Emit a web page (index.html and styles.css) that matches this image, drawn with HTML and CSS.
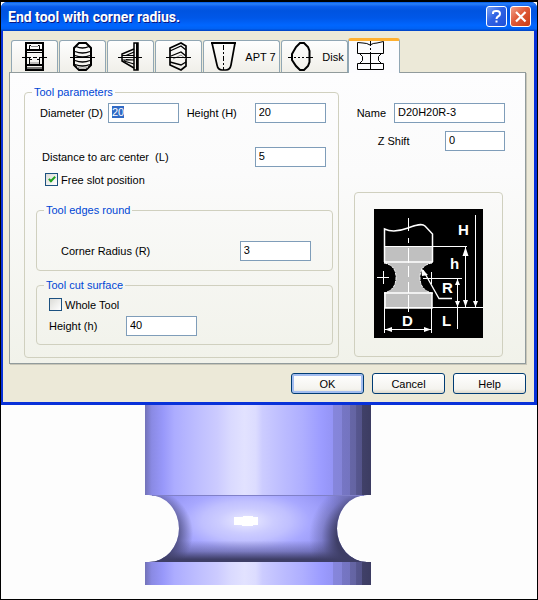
FILE: index.html
```html
<!DOCTYPE html>
<html lang="en">
<head>
<meta charset="utf-8">
<title>End tool with corner radius.</title>
<link rel="stylesheet" href="styles.css">
</head>
<body>
<main class="viewport">
  <section class="dialog" role="dialog" aria-labelledby="dialog-title">
    <header class="titlebar">
      <h1 class="title" id="dialog-title">End tool with corner radius.</h1>
      <button class="caption caption-help" type="button" aria-label="Context help">
        <svg width="19" height="19" viewBox="0 0 19 19" fill="none" stroke="#fff" stroke-width="2"><path d="M6 7V6Q6 4 9 4H10Q13 4 13 7Q13 8.500 11 9.500Q9.500 10.300 9.500 12"/><path d="M9.500 13.500V15.500"/></svg>
      </button>
      <button class="caption caption-close" type="button" aria-label="Close">
        <svg width="19" height="19" viewBox="0 0 19 19" fill="none" stroke="#fff" stroke-width="2.200"><path d="M5 5L14.500 14.500M14.500 5L5 14.500"/></svg>
      </button>
    </header>
    <form class="content">
      <div class="tabs" role="tablist">
        <button class="tab" type="button" role="tab" aria-label="Cylindrical">
          <svg width="26" height="29" viewBox="0 0 26 29" fill="none" stroke="#000" stroke-width="2"><rect x="4" y="1" width="17" height="27"/><path d="M4 8H21M4 23H21" /><path d="M4 10.500H21M4 26H21" stroke-width="1"/><path d="M7.500 7V3.500H9M17.500 7V3.500H16M7.500 16V22M17.500 16V22" stroke-width="1"/><path d="M7 17.500H10M15 17.500H18" stroke-width="1"/><path d="M8 21H17M9 4.500H16" stroke="#888" stroke-width="1"/><path d="M0 15.500H9M11 15.500H15M17 15.500H25" stroke-width="1"/></svg>
        </button>
        <button class="tab" type="button" role="tab" aria-label="Rounded">
          <svg width="26" height="29" viewBox="0 0 26 29" fill="none" stroke="#000" stroke-width="2"><path d="M9 1H16L21 6V23L16 28H9L4 23V6Z"/><path d="M6 4.500Q12.500 7.500 19 4.500M5 9.500Q12.500 12.500 20 9.500M5 13.500Q12.500 16.500 20 13.500M5 18.500Q12.500 21.500 20 18.500M5 22.500Q12.500 25.500 20 22.500" stroke-width="1.300"/><path d="M7 25.500Q12.500 27 18 25.500" stroke="#999" stroke-width="1"/><path d="M0 15.500H25" stroke-width="1"/></svg>
        </button>
        <button class="tab" type="button" role="tab" aria-label="Conical">
          <svg width="26" height="29" viewBox="0 0 26 29" fill="none" stroke="#000" stroke-width="2"><path d="M16 1H20V28H16Z" stroke-width="1.500"/><path d="M19 1V28"/><path d="M16 7L4 12V19L16 26" stroke-width="1.500"/><path d="M16 10L8 13.500M16 18L8 17.500M16 22L6 19M4 13.500H16M4 18H16" stroke-width="1.200"/><path d="M0 15.500H24" stroke-width="1"/></svg>
        </button>
        <button class="tab" type="button" role="tab" aria-label="Angular">
          <svg width="26" height="29" viewBox="0 0 26 29" fill="none" stroke="#000" stroke-width="1.700"><path d="M4 6L15 1L20 4V24L15 28L4 23Z"/><path d="M4 9L15 4L20 8M5 14L15 10L20 14M4 20L15 23L20 20" stroke-width="1.300"/><path d="M7 17L15 13L20 17" stroke="#888" stroke-width="1"/><path d="M0 15.500H25" stroke-width="1"/></svg>
        </button>
        <button class="tab tab-wide" type="button" role="tab">
          <svg width="26" height="29" viewBox="0 0 26 29" fill="none" stroke="#000" stroke-width="2"><path d="M0 1H25" /><path d="M1 1L6 23Q7 28 11 28H15Q19 28 20 23L24 1" stroke-width="1.700"/><path d="M12.500 3V28" stroke-width="1" stroke-dasharray="5 2 2 2"/></svg>
          <span>APT 7</span>
        </button>
        <button class="tab tab-disk" type="button" role="tab">
          <svg width="26" height="29" viewBox="0 0 26 29" fill="none" stroke="#000" stroke-width="2"><path d="M12 1H16L20 5L21.500 9V20L20 24L16 28H12L8 24L4 18V12L8 5Z"/><path d="M0 15.500H4M6 15.500H8M10 15.500H12M14 15.500H16M18 15.500H25" stroke-width="1"/></svg>
          <span>Disk</span>
        </button>
        <button class="tab tab-active" type="button" role="tab" aria-selected="true" aria-label="Corner radius">
          <svg width="27" height="30" viewBox="0 0 27 30" fill="none" stroke="#000"><path d="M.5 12.500V1.500L6 2Q10 2 13 4Q16 2 20 2L26.500 .5V12.500ZM.5 22.500H26.500V28.500H.5ZM2.500 12.500L5.500 15.500V19.500L2.500 22.500M24.500 12.500L21.500 15.500V19.500L24.500 22.500M13.500 0V5M13.500 7V9M13.500 11V29"/></svg>
        </button>
      </div>

      <div class="panel">
        <fieldset class="group group-main">
          <legend>Tool parameters</legend>
          <div class="group-body">
            <div class="row row-size">
              <label class="short" for="diameter">Diameter (D)</label>
              <input class="num" id="diameter" type="text" value="20">
              <label class="short second" for="height">Height (H)</label>
              <input class="num" id="height" type="text" value="20">
            </div>
            <div class="row row-arc">
              <label for="arc">Distance to arc center &nbsp;(L)</label>
              <input class="num" id="arc" type="text" value="5">
            </div>
            <label class="check check-slot"><input type="checkbox" checked>Free slot position</label>

            <fieldset class="group group-edges">
              <legend>Tool edges round</legend>
              <div class="group-body row">
                <label for="radius">Corner Radius (R)</label>
                <input class="num" id="radius" type="text" value="3">
              </div>
            </fieldset>

            <fieldset class="group group-cut">
              <legend>Tool cut surface</legend>
              <div class="group-body">
                <label class="check"><input type="checkbox">Whole Tool</label>
                <div class="row row-cut">
                  <label for="cut">Height (h)</label>
                  <input class="num" id="cut" type="text" value="40">
                </div>
              </div>
            </fieldset>
          </div>
        </fieldset>

        <div class="side">
          <div class="row row-name">
            <label for="name">Name</label>
            <input class="name" id="name" type="text" value="D20H20R-3">
          </div>
          <div class="row row-shift">
            <label for="shift">Z Shift</label>
            <input class="shift" id="shift" type="text" value="0">
          </div>
          <figure class="preview">
            <svg class="diagram" width="109" height="129" viewBox="0 0 109 129" role="img" aria-label="Tool dimensions">
              <rect width="109" height="129" fill="#000"/>
              <path d="M10 38H58V54Q46 56 46 68.500Q46 81 58 84V99H10V84Q22 81 22 68.500Q22 56 10 54Z" fill="#c0c0c0"/>
              <g fill="none" stroke="#fff">
                <path d="M10.500 53V20C17 23 26 22 34 19S48 14 51 17L58.500 25V53" stroke-width="1.500"/>
                <path d="M10 53H59M10 84H59M11 84V99H58V84" stroke-width="1.500"/>
                <path d="M10 54Q22 56 22 68.500Q22 81 10 84M58 54Q46 56 46 68.500Q46 81 58 84" stroke-dasharray="3 1"/>
                <path d="M10 37.500H93M10 98.500H109M49 69.500H88M3 68.500H15M9.500 62V75M57.500 63V75"/>
                <path d="M34.500 9V22M34.500 29V34M34.500 39V54M34.500 57V68M34.500 73V84M34.500 86V103"/>
                <path d="M101.500 6V98M91.500 38V98M83.500 70V120M10.500 98V124M57.500 98V124M11 120.500H57"/>
                <path d="M49 61L65 89.500H78" stroke-width="1.300"/>
              </g>
              <path d="M91.500 38L88.500 47H94.500ZM91.500 98L89 91H94ZM83.500 70L81 76H86ZM83.500 98L81 92H86ZM101.500 98L99 92H104ZM11 120.500L18 118V123ZM57 120.500L50 118V123ZM47 59L48 67L54 66Z" fill="#fff"/>
              <g class="marks">
                <text x="84" y="26">H</text><text x="76" y="60">h</text><text x="68" y="84">R</text><text x="28" y="117">D</text><text x="68" y="117">L</text>
              </g>
            </svg>
          </figure>
        </div>
      </div>

      <div class="actions">
        <button class="action action-default" type="submit">OK</button>
        <button class="action" type="button">Cancel</button>
        <button class="action" type="button">Help</button>
      </div>
    </form>
  </section>

  <svg class="model" width="226" height="180" viewBox="0 0 226 180" role="img" aria-label="Tool model">
    <defs>
      <linearGradient id="side">
        <stop offset="0" stop-color="#7272b8"/><stop offset=".03" stop-color="#8a8ae4"/><stop offset=".08" stop-color="#9898fa"/><stop offset=".13" stop-color="#acacff"/><stop offset=".22" stop-color="#bcbcff"/><stop offset=".32" stop-color="#cccbff"/><stop offset=".38" stop-color="#dadaff"/><stop offset=".44" stop-color="#e2e2ff"/><stop offset=".49" stop-color="#dcdcff"/><stop offset=".52" stop-color="#ccccff"/><stop offset=".6" stop-color="#bebeff"/><stop offset=".7" stop-color="#aeaeff"/><stop offset=".78" stop-color="#9c9cff"/><stop offset=".83" stop-color="#9494f6"/>
        <stop offset=".832" stop-color="#8686dc"/><stop offset=".87" stop-color="#8484d8"/><stop offset=".872" stop-color="#7676c4"/><stop offset=".906" stop-color="#7474c0"/><stop offset=".908" stop-color="#6666a6"/><stop offset=".934" stop-color="#6464a2"/><stop offset=".936" stop-color="#56568e"/><stop offset=".96" stop-color="#54548a"/><stop offset=".962" stop-color="#404068"/><stop offset="1" stop-color="#3c3c62"/>
      </linearGradient>
      <radialGradient id="shine" gradientUnits="userSpaceOnUse" cx="0" cy="0" r="1" gradientTransform="translate(101 116) scale(110 50)">
        <stop offset="0" stop-color="#f4f4ff"/><stop offset=".12" stop-color="#dcdcff"/><stop offset=".25" stop-color="#ccccff"/><stop offset=".4" stop-color="#c0c0ff"/><stop offset=".58" stop-color="#a8a8ff"/><stop offset=".85" stop-color="#9494f4"/><stop offset="1" stop-color="#8686dc"/>
      </radialGradient>
      <linearGradient id="under" x2="0" y2="1">
        <stop offset=".68" stop-color="#3e3e66" stop-opacity="0"/><stop offset=".84" stop-color="#3e3e66" stop-opacity=".4"/><stop offset=".96" stop-color="#3e3e66"/>
      </linearGradient>
      <radialGradient id="edge" gradientUnits="userSpaceOnUse" cx="222" cy="123.500" r="58" gradientTransform="translate(0 9)">
        <stop offset=".52" stop-color="#3e3e66"/><stop offset=".62" stop-color="#3e3e66" stop-opacity=".75"/><stop offset=".78" stop-color="#3e3e66" stop-opacity=".3"/><stop offset="1" stop-color="#3e3e66" stop-opacity="0"/>
      </radialGradient>
      <radialGradient id="edge-left" gradientUnits="userSpaceOnUse" cx="4" cy="128" r="44">
        <stop offset=".62" stop-color="#3e3e66" stop-opacity=".8"/><stop offset="1" stop-color="#3e3e66" stop-opacity="0"/>
      </radialGradient>
    </defs>
    <rect width="226" height="90" fill="url(#side)"/>
    <path d="M4 90A30 33.500 0 0 1 4 157H222A30 33.500 0 0 1 222 90Z" fill="url(#shine)"/>
    <path d="M4 90A30 33.500 0 0 1 4 157H222A30 33.500 0 0 1 222 90Z" fill="url(#under)"/>
    <path d="M4 90A30 33.500 0 0 1 4 157H222A30 33.500 0 0 1 222 90Z" fill="url(#edge)"/>
    <path d="M4 90A30 33.500 0 0 1 4 157H222A30 33.500 0 0 1 222 90Z" fill="url(#edge-left)"/>
    <path d="M89 112H98V111H108V112H113V120H108V121H97V120H89Z" fill="#fff"/>
    <path d="M7 90.500H219" stroke="#8080c8"/>
    <rect y="157" width="226" height="23" fill="url(#side)"/>
  </svg>
</main>
<script src="script.js"></script>
</body>
</html>
```
FILE: styles.css
```css
* {
  box-sizing: border-box;
}

body {
  margin: 0;
  background: #fdfdfd;
  color: #000;
  font: 11px/14px "Liberation Sans", Arial, sans-serif;
}

button,
input {
  font: inherit;
  color: inherit;
}

.viewport {
  min-height: 100vh;
  border: 1px solid #000;
  border-top-width: 2px;
}

.dialog {
  background: #0a3fdc;
  border-radius: 6px 6px 0 0;
}

.titlebar {
  display: flex;
  align-items: center;
  gap: 3px;
  height: 29px;
  padding: 0 6px 0 7px;
  border-radius: 6px 6px 0 0;
  background: linear-gradient(#0058e6 0, #2a80f8 6%, #0a5cec 16%, #0054e0 30%, #0057e8 55%, #0066ff 80%, #0062f4 92%, #0040c0 100%);
}

.title {
  flex: 1;
  margin: 0;
  color: #fff;
  font: bold 14px/16px Roboto, sans-serif;
  text-shadow: 1px 1px 0 #0a1883;
}

.caption {
  display: grid;
  place-items: center;
  width: 21px;
  height: 21px;
  padding: 0;
  border: 1px solid #fff;
  border-radius: 3px;
}

.caption-help {
  background: linear-gradient(135deg, #7ba2f4, #2f62e4 45%, #1f50d8);
}

.caption-close {
  background: linear-gradient(135deg, #f0a08a, #e05a38 45%, #c83c14);
}

.content {
  padding: 7px 8px 8px 6px;
  border: solid #0831d9;
  border-width: 0 3px 3px 2px;
  background: #ece9d8;
}

.tabs {
  display: flex;
  align-items: flex-end;
  gap: 1px;
  padding-left: 2px;
}

.tab {
  display: flex;
  align-items: center;
  justify-content: center;
  gap: 8px;
  width: 47px;
  height: 32px;
  padding: 0;
  border: 1px solid #91a7b4;
  border-bottom: 0;
  border-radius: 3px 3px 0 0;
  background: linear-gradient(#fefefe, #f0efe9);
}

.tab-wide {
  width: 77px;
  padding-left: 4px;
}

.tab-disk {
  width: 67px;
  padding-left: 3px;
}

.tab-active {
  position: relative;
  width: 52px;
  height: 35px;
  margin: 0 0 -1px -1px;
  padding: 0 8px 3px 0;
  border-top: 3px solid #ffb030;
  background: #fcfcfe;
}

.panel {
  display: grid;
  grid-template-columns: 21fr 10fr;
  gap: 15px;
  padding: 12px 20px 5px 14px;
  border: 1px solid #919b9c;
  background: linear-gradient(#fdfdfe 0, #fbfbfb 35%, #f1f2ea 100%);
  box-shadow: 1px 1px 0 #c8c6b8;
}

.group {
  min-width: 0;
  margin: 0;
  padding: 0;
  border: 1px solid #d0d0bf;
  border-radius: 4px;
}

.group legend {
  height: 14px;
  margin-left: 7px;
  padding: 0 2px;
  color: #0046d5;
}

.row {
  display: flex;
  align-items: center;
  justify-content: space-between;
}

.group-main > .group-body {
  padding: 4px 5px 12px 11px;
}

.group-edges {
  margin-top: 17px;
}

.group-edges > .group-body {
  padding: 24px 21px 9px 24px;
}

.group-cut {
  margin-top: 7px;
}

.group-cut > .group-body {
  padding: 6px 12px 8px;
}

.row-size {
  padding: 0 7px 0 4px;
}

.short {
  width: 68px;
}

.second {
  margin-left: auto;
}

.row-arc {
  margin-top: 24px;
  padding: 0 7px 0 6px;
}

input[type="text"] {
  height: 20px;
  padding: 0 3px 3px;
  border: 1px solid #7f9db9;
  border-radius: 0;
  outline: 0;
  background: #fff;
}

input::selection {
  background: #316ac5;
  color: #fff;
}

.num {
  width: 71px;
}

.check {
  display: flex;
  align-items: center;
  gap: 3px;
  height: 13px;
}

.check input {
  display: grid;
  place-items: center;
  width: 13px;
  height: 13px;
  margin: 0;
  border: 1px solid #1c5180;
  background: linear-gradient(135deg, #dcdcd7, #fff);
  appearance: none;
}

.check input:checked::before {
  box-sizing: content-box;
  width: 2px;
  height: 5px;
  margin-top: -2px;
  border: solid #21a121;
  border-width: 0 2px 2px 0;
  content: "";
  transform: rotate(45deg);
}

.check-slot {
  margin: 6px 0 0 9px;
}

.row-cut {
  justify-content: flex-start;
  margin-top: 5px;
}

.row-cut label {
  width: 77px;
}

.side {
  display: flex;
  flex-direction: column;
  padding-top: 18px;
}

.row-name {
  gap: 8px;
  padding-left: 3px;
}

.row-shift {
  margin-top: 8px;
  padding-left: 24px;
}

.name {
  flex: 1;
  min-width: 0;
  max-width: 111px;
}

.shift {
  width: 60px;
}

.preview {
  display: grid;
  place-items: center;
  margin: 41px 2px 0 0;
  padding: 16px 0 18px;
  border: 1px solid #d0d0bf;
  border-radius: 4px;
}

.marks {
  fill: #fff;
  font: bold 15px "Liberation Sans", Arial, sans-serif;
}

.actions {
  display: flex;
  justify-content: flex-end;
  gap: 8px;
  margin-top: 9px;
}

.action {
  width: 73px;
  height: 21px;
  padding: 0;
  border: 1px solid #003c74;
  border-radius: 3px;
  background: linear-gradient(#fff, #f4f3ee 80%, #dcd8cc);
}

.action-default {
  box-shadow: inset 0 0 0 2px #a3bdf0;
}

.model {
  display: block;
  margin-left: 26.8%;
}
```
FILE: script.js
```js
const diameter = document.getElementById("diameter");
diameter.focus();
diameter.select();
```
